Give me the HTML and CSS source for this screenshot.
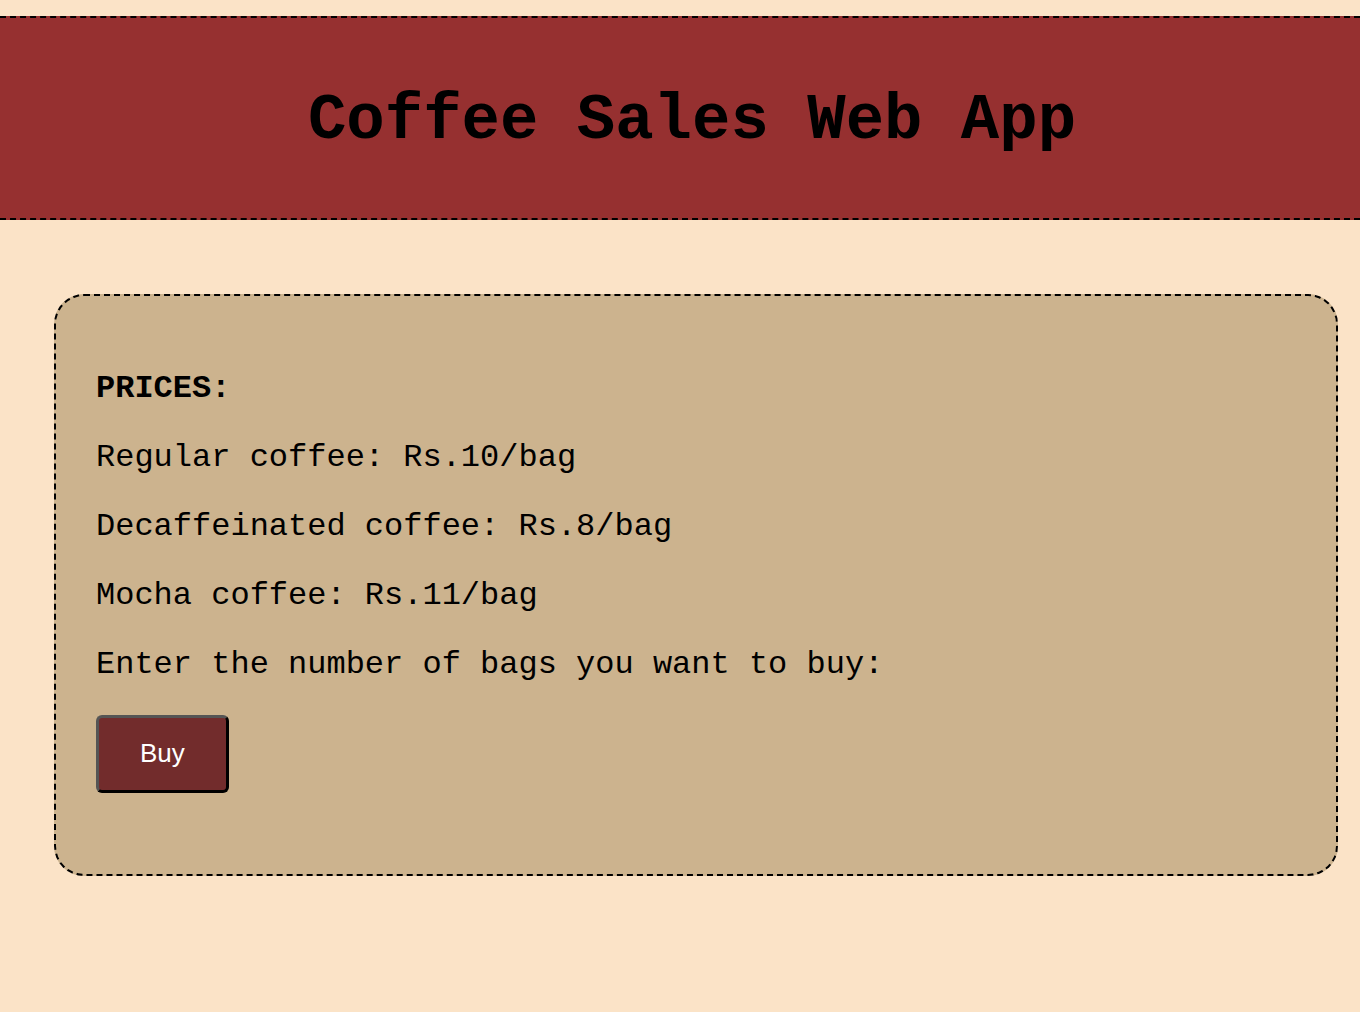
FILE: index.html
```html
<!DOCTYPE html>
<html>
<head>
<meta charset="utf-8">
<title>Coffee Sales Web App</title>
<link rel="stylesheet" href="styles.css">
</head>
<body>
<header class="site-header">
  <h1 class="title">Coffee Sales Web App</h1>
</header>
<main class="card">
  <p class="line"><b>PRICES:</b></p>
  <p class="line">Regular coffee: Rs.10/bag</p>
  <p class="line">Decaffeinated coffee: Rs.8/bag</p>
  <p class="line">Mocha coffee: Rs.11/bag</p>
  <p class="line">Enter the number of bags you want to buy:</p>
  <button class="buy" type="button">Buy</button>
</main>
</body>
</html>
```
FILE: styles.css
```css
html, body {
  margin: 0;
  padding: 0;
}
body {
  background: #fbe3c7;
  font-family: "Liberation Mono", "Courier New", monospace;
  color: #000;
}
.site-header {
  margin-top: 16px;
  background: #963030;
  border-top: 2px dashed #000;
  border-bottom: 2px dashed #000;
  padding: 25px 0 18px 24px;
  text-align: center;
}
.title {
  margin: 42px 0;
  font-size: 64px;
  font-weight: bold;
  line-height: 73px;
}
.card {
  display: block;
  margin: 74px 22px 0 54px;
  background: #ccb38e;
  border: 2px dashed #000;
  border-radius: 30px;
  padding: 42px 41px 81px 40px;
}
.line {
  font-size: 32px;
  line-height: 37px;
  margin: 32px 0;
}
.buy {
  display: block;
  background: #722c2c;
  color: #fff;
  font-family: "Liberation Sans", Arial, sans-serif;
  font-size: 26px;
  line-height: 30px;
  padding: 20px 41px 22px;
  border-style: solid;
  border-width: 3px;
  border-color: #555 #000 #000 #555;
  border-radius: 6px;
}
```
